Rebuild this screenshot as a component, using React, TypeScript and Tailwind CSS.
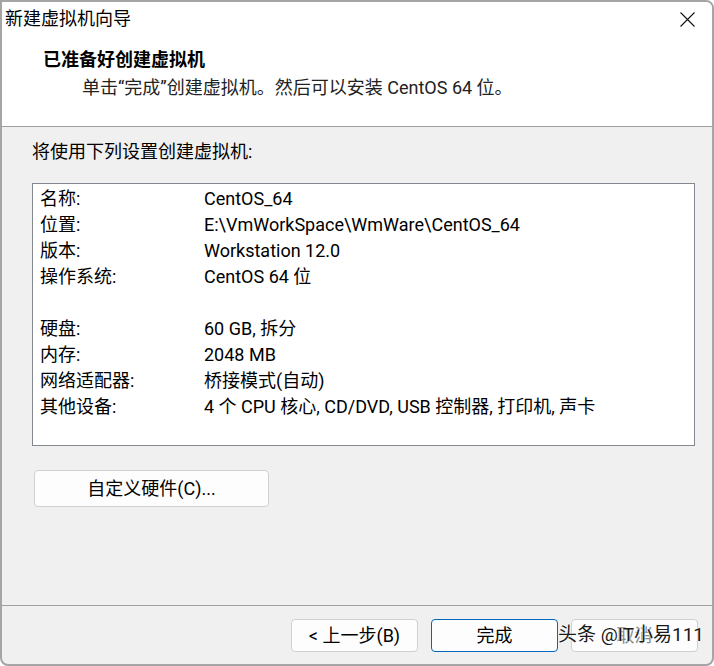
import React from "react";

const rows: [string, string][] = [
  ["名称:", "CentOS_64"],
  ["位置:", "E:\\VmWorkSpace\\WmWare\\CentOS_64"],
  ["版本:", "Workstation 12.0"],
  ["操作系统:", "CentOS 64 位"],
  ["", ""],
  ["硬盘:", "60 GB, 拆分"],
  ["内存:", "2048 MB"],
  ["网络适配器:", "桥接模式(自动)"],
  ["其他设备:", "4 个 CPU 核心, CD/DVD, USB 控制器, 打印机, 声卡"],
];

const font = { fontFamily: 'Roboto, "Noto Sans CJK SC", sans-serif' };

export default function App() {
  return (
    <div className="w-[714px] h-[666px] bg-white text-black" style={font}>
      {/* window frame */}
      <div className="relative w-full h-full flex flex-col border-2 border-[#a5a5a5] rounded-tr-[8px] rounded-b-[8px] overflow-hidden bg-[#f0f0f0]">
        {/* header */}
        <div className="bg-white border-b border-[#a0a0a0] h-[125px] flex flex-col">
          <div className="h-[34px] flex items-center justify-between pl-[3px] pr-[17px]">
            <span className="text-[18px] leading-none">新建虚拟机向导</span>
            <svg width="15" height="15" viewBox="0 0 15 15" className="mt-[1px]">
              <path d="M0.5 0.5 L14.5 14.5 M14.5 0.5 L0.5 14.5" stroke="#111" strokeWidth="1.1" />
            </svg>
          </div>
          <div className="pl-[41px] mt-[11px] text-[18px] leading-[26px] font-bold">已准备好创建虚拟机</div>
          <div className="pl-[80px] mt-[2px] text-[18px] leading-[26px] text-[#222]">
            单击“完成”创建虚拟机。然后可以安装 CentOS 64 位。
          </div>
        </div>

        {/* body */}
        <div className="flex-1 flex flex-col pl-[30px] pr-[17px]">
          <div className="mt-[12px] text-[18px] leading-[26px]">将使用下列设置创建虚拟机:</div>
          <div className="mt-[18px] h-[263px] bg-white border border-[#828790] pt-[2px] pl-[7px]">
            {rows.map(([k, v], i) => (
              <div key={i} className="flex h-[26px] items-center text-[18px] leading-[26px]">
                <span className="w-[164px] shrink-0">{k}</span>
                <span className="whitespace-nowrap">{v}</span>
              </div>
            ))}
          </div>
          <button className="mt-[24px] ml-[2px] w-[235px] h-[37px] rounded-[4px] border border-[#d0d0d0] bg-[#fdfdfd] text-[18px] leading-none">
            自定义硬件(C)...
          </button>
        </div>

        {/* footer */}
        <div className="relative h-[59px] border-t border-[#a0a0a0] flex justify-end items-start gap-[13px] pt-[13px] pr-[14px]">
          <button className="w-[127px] h-[33px] rounded-[4px] border border-[#d0d0d0] bg-[#fdfdfd] text-[18px] leading-none">
            &lt; 上一步(B)
          </button>
          <button className="w-[127px] h-[33px] rounded-[4px] border border-[#0067c0] bg-[#fdfdfd] text-[18px] leading-none">
            完成
          </button>
          <button className="w-[127px] h-[33px] rounded-[4px] border border-[#d0d0d0] bg-[#fdfdfd] text-[18px] leading-none text-[#888]">
            取消
          </button>
          {/* watermark */}
          <span
            className="absolute left-[556px] top-[19px] text-[19px] leading-none text-[#1a1a1a] whitespace-nowrap"
            style={{ textShadow: "0 0 2px #fff, 0 0 2px #fff" }}
          >
            头条 @IT小易111
          </span>
        </div>
      </div>
    </div>
  );
}
